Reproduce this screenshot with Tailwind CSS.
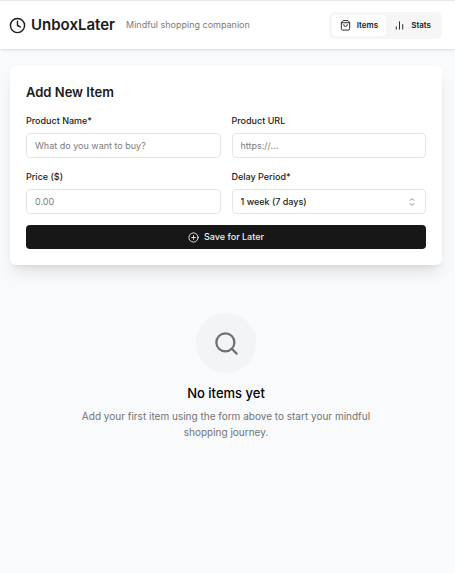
<!DOCTYPE html>
<html lang="en">
  <head>
    <meta charset="UTF-8" />
    <meta name="viewport" content="width=device-width, initial-scale=1.0" />
    <title>UnboxLater</title>
    <script src="https://cdn.jsdelivr.net/npm/@tailwindcss/browser@4"></script>
  </head>
  <body class="min-h-screen bg-[#f8fafc] font-['Inter',sans-serif] text-[#1a1a1a]">
    <header class="border-t border-[#e8e8e8] bg-white shadow-sm">
      <div class="flex h-12 items-center justify-between pr-[13px] pl-[9px]">
        <div class="flex items-center gap-[11px]">
          <h1 class="flex items-center gap-[5px] text-[15px] leading-6 font-semibold">
            <svg class="size-[17px]" viewBox="0 0 24 24" fill="none" stroke="currentColor" stroke-width="2" stroke-linecap="round" stroke-linejoin="round">
              <circle cx="12" cy="12" r="10" />
              <path d="M12 6v6l4 2" />
            </svg>
            UnboxLater
          </h1>
          <p class="text-[9px] text-[#7c7c7c]">Mindful shopping companion</p>
        </div>
        <nav class="flex rounded-md bg-[#f6f6f6] p-[3px]">
          <button type="button" class="flex h-[21px] items-center gap-[6px] rounded bg-white px-2 text-[8px] font-semibold">
            <svg class="size-[11px]" viewBox="0 0 24 24" fill="none" stroke="currentColor" stroke-width="2" stroke-linecap="round" stroke-linejoin="round">
              <path d="M6 2 3 5v14a3 3 0 0 0 3 3h12a3 3 0 0 0 3-3V5l-3-3Z" />
              <path d="M3 6h18" />
              <path d="M16 10a4 4 0 0 1-8 0" />
            </svg>
            Items
          </button>
          <button type="button" class="flex h-[21px] items-center gap-[6px] rounded px-2 text-[8px] font-semibold">
            <svg class="size-[11px]" viewBox="0 0 24 24" fill="none" stroke="currentColor" stroke-width="2" stroke-linecap="round" stroke-linejoin="round">
              <path d="M5 20v-5" />
              <path d="M12 20V4" />
              <path d="M19 20v-10" />
            </svg>
            Stats
          </button>
        </nav>
      </div>
    </header>

    <main class="pt-[17px] pr-[13px] pl-[10px]">
      <section class="rounded-md bg-white p-4 shadow-lg">
        <h2 class="text-[13px] leading-5 font-semibold">Add New Item</h2>
        <form class="mt-[13px]">
          <div class="grid grid-cols-2 gap-x-[11px] gap-y-[13px]">
            <div>
              <label for="name" class="block text-[9px] leading-3 font-medium">Product Name*</label>
              <input id="name" type="text" placeholder="What do you want to buy?" class="mt-[6px] block h-[25px] w-full rounded border border-[#e5e5e5] px-2 text-[9px] placeholder:text-[#7c7c7c]" />
            </div>
            <div>
              <label for="url" class="block text-[9px] leading-3 font-medium">Product URL</label>
              <input id="url" type="url" placeholder="https://..." class="mt-[6px] block h-[25px] w-full rounded border border-[#e5e5e5] px-2 text-[9px] placeholder:text-[#7c7c7c]" />
            </div>
            <div>
              <label for="price" class="block text-[9px] leading-3 font-medium">Price ($)</label>
              <input id="price" type="text" inputmode="decimal" placeholder="0.00" class="mt-[6px] block h-[25px] w-full rounded border border-[#e5e5e5] px-2 text-[9px] placeholder:text-[#7c7c7c]" />
            </div>
            <div>
              <label for="delay" class="block text-[9px] leading-3 font-medium">Delay Period*</label>
              <div class="relative mt-[6px]">
                <select id="delay" class="block h-[25px] w-full appearance-none rounded border border-[#e5e5e5] bg-white px-2 text-[9px] font-medium">
                  <option>1 day</option>
                  <option>3 days</option>
                  <option selected>1 week (7 days)</option>
                  <option>1 month (30 days)</option>
                </select>
                <svg class="pointer-events-none absolute top-2 right-[9px] size-[10px] text-[#808080]" viewBox="0 0 24 24" fill="none" stroke="currentColor" stroke-width="2" stroke-linecap="round" stroke-linejoin="round">
                  <path d="m7 16 5 4 5-4" />
                  <path d="m7 8 5-4 5 4" />
                </svg>
              </div>
            </div>
          </div>
          <button type="submit" class="mt-[11px] flex h-6 w-full items-center justify-center gap-[5px] rounded bg-[#171717] text-[9px] font-medium text-[#f0f0f0]">
            <svg class="size-[11px]" viewBox="0 0 24 24" fill="none" stroke="currentColor" stroke-width="2" stroke-linecap="round" stroke-linejoin="round">
              <circle cx="12" cy="12" r="10" />
              <path d="M8 12h8M12 8v8" />
            </svg>
            Save for Later
          </button>
        </form>
      </section>

      <section class="flex flex-col items-center pt-12 text-center">
        <div class="flex size-[60px] items-center justify-center rounded-full bg-[#f3f4f6]">
          <svg class="size-[27px] text-[#707070]" viewBox="0 0 24 24" fill="none" stroke="currentColor" stroke-width="2" stroke-linecap="round" stroke-linejoin="round">
            <circle cx="11" cy="11" r="8" />
            <path d="m21 21-4.300-4.300" />
          </svg>
        </div>
        <h3 class="mt-[10px] text-[13px] leading-5 font-medium text-black">No items yet</h3>
        <p class="mt-[5px] max-w-[305px] text-[10px] leading-4 text-[#737373]">
          Add your first item using the form above to start your mindful shopping journey.
        </p>
      </section>
    </main>
  </body>
</html>
